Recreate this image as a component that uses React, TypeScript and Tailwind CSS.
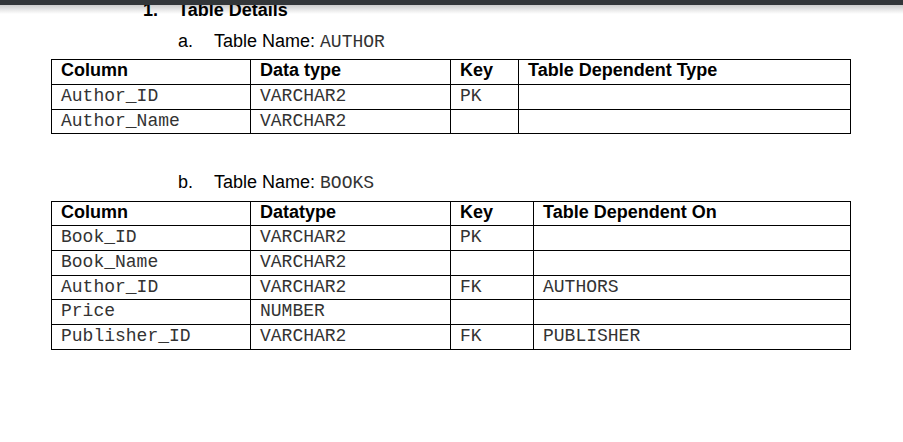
const sans = "font-['Liberation_Sans',Arial,sans-serif]";
const mono = "font-['Liberation_Mono','Courier_New',monospace]";

type Table = {
  headers: string[];
  widths: string[];
  rows: string[][];
  headerHeight: string;
  rowHeights: string[];
};

const authorTable: Table = {
  headers: ["Column", "Data type", "Key", "Table Dependent Type"],
  widths: ["w-[199px]", "w-[200px]", "w-[68px]", "flex-1"],
  rows: [
    ["Author_ID", "VARCHAR2", "PK", ""],
    ["Author_Name", "VARCHAR2", "", ""],
  ],
  headerHeight: "h-[25px]",
  rowHeights: ["h-[25px]", "h-[24px]"],
};

const booksTable: Table = {
  headers: ["Column", "Datatype", "Key", "Table Dependent On"],
  widths: ["w-[199px]", "w-[200px]", "w-[83px]", "flex-1"],
  rows: [
    ["Book_ID", "VARCHAR2", "PK", ""],
    ["Book_Name", "VARCHAR2", "", ""],
    ["Author_ID", "VARCHAR2", "FK", "AUTHORS"],
    ["Price", "NUMBER", "", ""],
    ["Publisher_ID", "VARCHAR2", "FK", "PUBLISHER"],
  ],
  headerHeight: "h-[24px]",
  rowHeights: ["h-[25px]", "h-[25px]", "h-[24px]", "h-[25px]", "h-[25px]"],
};

function DetailTable({ table }: { table: Table }) {
  return (
    <div className="ml-[51px] w-[800px] border-l border-t border-black">
      <div className={`flex ${table.headerHeight} border-b border-black`}>
        {table.headers.map((h, i) => (
          <div
            key={h}
            className={`${table.widths[i]} border-r border-black pl-[9px] ${sans} text-[18px] leading-[20px] font-bold text-black`}
          >
            {h}
          </div>
        ))}
      </div>
      {table.rows.map((row, r) => (
        <div key={r} className={`flex ${table.rowHeights[r]} border-b border-black`}>
          {row.map((cell, i) => (
            <div
              key={i}
              className={`${table.widths[i]} border-r border-black pl-[9px] pt-[1px] ${mono} text-[18px] leading-[20px] text-[#333]`}
            >
              {cell}
            </div>
          ))}
        </div>
      ))}
    </div>
  );
}

function SubHeading({ label, name }: { label: string; name: string }) {
  return (
    <div className={`flex h-[21px] pl-[178px] ${sans} text-[18px] leading-[21px] text-black`}>
      <span className="w-[36px]">{label}</span>
      <span>
        Table Name: <span className={`${mono} leading-none text-[#333]`}>{name}</span>
      </span>
    </div>
  );
}

export default function App() {
  return (
    <div className="relative w-[903px] h-[442px] overflow-hidden bg-white">
      {/* viewer toolbar edge */}
      <div className="absolute top-0 left-0 right-0 z-10">
        <div className="h-[5px] bg-[#323639]" />
        <div className="h-[9px] bg-gradient-to-b from-black/20 to-transparent" />
      </div>

      <div className={`flex h-[21px] pl-[143px] ${sans} text-[18px] leading-[21px] font-bold text-black`}>
        <span className="w-[35px]">1.</span>
        <span>Table Details</span>
      </div>

      <div className="mt-[10px]">
        <SubHeading label="a." name="AUTHOR" />
      </div>
      <div className="mt-[7px]">
        <DetailTable table={authorTable} />
      </div>

      <div className="mt-[38px]">
        <SubHeading label="b." name="BOOKS" />
      </div>
      <div className="mt-[8px]">
        <DetailTable table={booksTable} />
      </div>
    </div>
  );
}
